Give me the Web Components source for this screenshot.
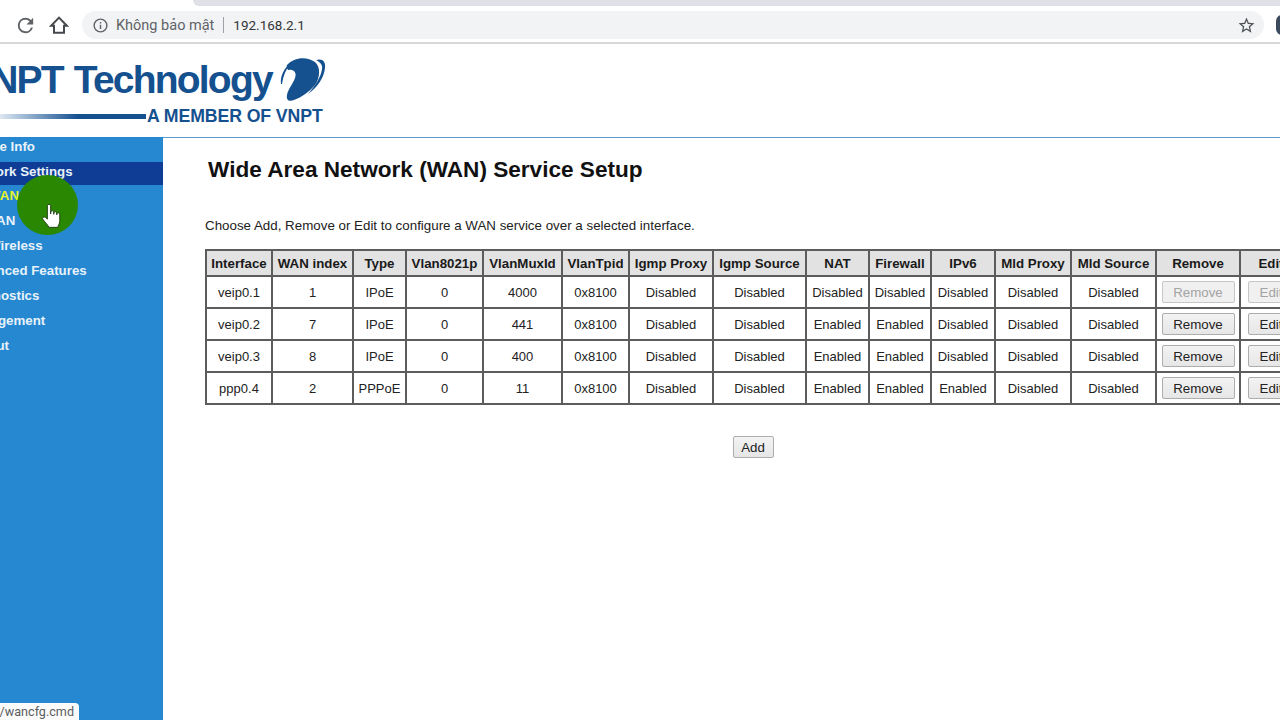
<!DOCTYPE html>
<html lang="vi">
<head>
<meta charset="utf-8">
<title>WAN Service Setup</title>
<style>
  html, body { margin: 0; height: 720px; overflow: hidden; background: #fff; font-family: "Liberation Sans", Arial, sans-serif; }
  .page { display: flex; flex-direction: column; width: 1280px; height: 720px; overflow: hidden; position: relative; }
  .scrolled { display: flex; flex-direction: column; flex: 1; margin-left: -40px; min-height: 0; }
  .content { display: flex; flex: 1; min-height: 0; }
</style>
</head>
<body>

<template id="browser-bar-tpl">
  <style>
    :host { display: block; height: 44px; background: #fff; border-bottom: 2px solid #d8d8da; box-sizing: border-box; flex: none; }
    .strip { height: 6px; margin-left: 193px; background: #dfe1e6; border-bottom-left-radius: 6px; }
    .row { display: flex; align-items: center; height: 28px; margin-top: 5px; padding-left: 14px; }
    svg { display: block; flex: none; }
    .home { margin-left: 12px; }
    .omni { display: flex; align-items: center; flex: none; width: 1182px; height: 28px; margin-left: 13px; border-radius: 14px; background: #f1f3f4; padding: 0 8px 0 10px; box-sizing: border-box; font: 13.5px "Roboto", "Liberation Sans", sans-serif; }
    .warn { color: #5f6368; margin-left: 7px; font-size: 14.5px; }
    .sep { width: 1px; height: 16px; background: #9aa0a6; margin: 0 9px 0 9px; }
    .url { color: #33363a; flex: 1; }
    .avatar { width: 12px; height: 20px; flex: none; border-radius: 10px; background: #3c4a5e; margin-left: 12px; }
  </style>
  <div class="strip"></div>
  <div class="row">
    <svg width="23" height="23" viewBox="0 0 24 24" fill="#5f6368"><path d="M17.65 6.35A7.96 7.96 0 0 0 12 4a8 8 0 1 0 7.73 10h-2.08A6 6 0 1 1 12 6c1.66 0 3.14.69 4.22 1.78L13 11h7V4l-2.35 2.35z"/></svg>
    <svg class="home" width="20" height="20" viewBox="0 0 24 24" fill="none" stroke="#45484c" stroke-width="2.4" stroke-linejoin="miter"><path d="M12 3.200 2.500 13H6v8.200h12V13h3.500L12 3.200z"/></svg>
    <div class="omni">
      <svg width="17" height="17" viewBox="0 0 24 24" fill="#5f6368"><path d="M11 7h2v2h-2zm0 4h2v6h-2zm1-9a10 10 0 1 0 0 20 10 10 0 0 0 0-20zm0 18a8 8 0 1 1 0-16 8 8 0 0 1 0 16z"/></svg>
      <span class="warn">Không bảo mật</span>
      <span class="sep"></span>
      <span class="url">192.168.2.1</span>
      <svg width="19" height="19" viewBox="0 0 24 24" fill="#505357"><path d="M22 9.240l-7.190-.62L12 2 9.190 8.630 2 9.240l5.460 4.730L5.820 21 12 17.270 18.180 21l-1.630-7.030L22 9.240zM12 15.400l-3.760 2.270 1-4.280-3.320-2.880 4.380-.38L12 6.100l1.710 4.040 4.380.38-3.320 2.880 1 4.280L12 15.400z"/></svg>
    </div>
    <span class="avatar"></span>
  </div>
</template>

<template id="vnpt-header-tpl">
  <style>
    :host { display: block; height: 93px; flex: none; background: #fff; box-sizing: border-box; color: #15508f; font-family: "Liberation Sans", Arial, sans-serif; font-weight: bold; }
    .wrap { display: flex; height: 100%; padding-left: 6px; box-sizing: border-box; }
    .txt { display: flex; flex-direction: column; width: 312px; }
    .name { font-size: 39px; line-height: 40px; margin-top: 16px; white-space: nowrap; letter-spacing: -1.8px; word-spacing: 2px; }
    .sub { display: flex; align-items: center; margin-top: 7px; white-space: nowrap; }
    .bar { width: 180px; height: 5px; flex: none; margin-right: 1px; background: linear-gradient(90deg, #fff 0%, #fff 12%, #a9c2da 30%, #15508f 62%, #15508f 100%); }
    .member { font-size: 17.7px; line-height: 18px; letter-spacing: -0.1px; }
    svg { display: block; margin: 10px 0 0 0; flex: none; }
  </style>
  <div class="wrap">
    <div class="txt">
      <div class="name"><slot name="name"></slot></div>
      <div class="sub"><span class="bar"></span><span class="member"><slot name="member"></slot></span></div>
    </div>
    <svg width="50" height="52" viewBox="6 3 50 52">
      <path fill="#15508f" d="M15 14C22 6 35 5 43 11c6 5 5 16 0 23-6 7-13 12-21 15-5 2-8 0-7-5 1-6 6-11 8-17 2-5-1-9-6-8-1 0-3-2-2-5z"/>
      <path fill="#15508f" d="M9 33c-1-8 3-16 10-21-5 6-8 13-9 21H9z"/>
      <path fill="#15508f" d="M44 9c6-2 10 1 9 8-1 10-8 20-17 26 7-8 13-17 14-25 1-4-2-7-6-9z"/>
    </svg>
  </div>
</template>

<template id="side-menu-tpl">
  <style>
    :host { display: block; width: 203px; flex: none; background: #2588d0; box-sizing: border-box; overflow: hidden; }
  </style>
  <slot></slot>
</template>

<template id="menu-item-tpl">
  <style>
    :host { display: block; height: 25px; padding: 1px 0 0 4px; box-sizing: border-box; font: bold 13.3px/18px "Liberation Sans", Arial, sans-serif; color: #e8f2fa; white-space: nowrap; }
    :host([sub]) { padding-left: 28px; }
    :host([current]) { background: #0f3d96; height: 23px; margin: 0 0 1px; }
    :host([active]) { color: #e6f52e; }
  </style>
  <slot></slot>
</template>

<template id="wan-table-tpl">
  <style>
    :host { display: block; width: 1096px; color: #222; font: 13px "Liberation Sans", Arial, sans-serif; }
    table { border-collapse: collapse; table-layout: fixed; width: 1096px; }
    th, td { border: 2px solid #5c5c5c; text-align: center; padding: 0; overflow: hidden; white-space: nowrap; }
    th { background: #e2e2e2; height: 24px; font-weight: bold; font-size: 13.3px; color: #1a1a1a; }
    td { height: 30px; }
    button { display: block; margin: 0 auto; font: 13.3px "Liberation Sans", Arial, sans-serif; color: #222; background: linear-gradient(#f3f3f3, #e6e6e6); border: 1px solid #adadad; border-radius: 2px; height: 22px; padding: 0; width: 73px; }
    button.edit { width: 47px; }
    button[disabled] { color: #a3a3a3; background: #f0f0f0; border-color: #c6c6c6; }
  </style>
  <table><colgroup></colgroup><thead><tr></tr></thead><tbody></tbody></table>
</template>

<template id="wan-setup-tpl">
  <style>
    :host { display: block; flex: 1; min-width: 0; overflow: hidden; background: #fff; border-top: 1px solid #5b9bd0; box-sizing: border-box; padding: 0 0 0 42px; }
    h1 { font: bold 22.6px/26px "Liberation Sans", Arial, sans-serif; color: #111; margin: 19px 0 0 3px; white-space: nowrap; }
    p { font: 13.35px/16px "Liberation Sans", Arial, sans-serif; color: #222; margin: 35px 0 15px; white-space: nowrap; }
    .actions { display: flex; justify-content: center; width: 1096px; margin-top: 31px; }
    button { font: 13.3px "Liberation Sans", Arial, sans-serif; color: #222; background: linear-gradient(#f3f3f3, #e6e6e6); border: 1px solid #adadad; border-radius: 2px; width: 41px; height: 22px; padding: 0; }
  </style>
  <h1><slot name="title"></slot></h1>
  <p><slot name="hint"></slot></p>
  <slot></slot>
  <div class="actions"><button>Add</button></div>
</template>

<template id="cursor-mark-tpl">
  <style>
    :host { display: block; position: absolute; left: 17px; top: 175px; width: 61px; height: 60px; border-radius: 50%; background: #2a8702; }
    svg { position: absolute; left: 25px; top: 29px; }
  </style>
  <svg width="20" height="25" viewBox="1.200 0.600 16 24" preserveAspectRatio="none">
    <path fill="#fff" stroke="#1c3c10" stroke-width="0.8" stroke-linejoin="round" d="M5.500 2.200c0-1.600 2.600-1.600 2.600 0v8l.1-2c0-1.400 2.400-1.400 2.400 0v2.300-1.400c0-1.400 2.400-1.400 2.400 0v2l.1-1c0-1.300 2.300-1.300 2.300 0v6.500c0 3-1.600 5.400-1.600 6.400H6.700c-.6-2.200-3.700-5.400-4.900-7.900-.7-1.500 1-2.700 2.300-1.500l1.400 1.500V2.200z"/>
  </svg>
</template>

<template id="status-bubble-tpl">
  <style>
    :host { display: block; position: absolute; left: 0; bottom: 0; width: 79px; height: 17px; overflow: hidden; background: #fbfbfb; border-top-right-radius: 4px; box-sizing: border-box; font: 12.6px/18px "Roboto", "Liberation Sans", sans-serif; color: #5a5d60; direction: rtl; padding-right: 5px; white-space: nowrap; }
    span { unicode-bidi: plaintext; }
  </style>
  <span><slot></slot></span>
</template>

<div class="page">
  <browser-bar></browser-bar>
  <div class="scrolled">
    <vnpt-header>
      <span slot="name">VNPT Technology</span>
      <span slot="member">A MEMBER OF VNPT</span>
    </vnpt-header>
    <div class="content">
      <side-menu>
        <menu-item>Device Info</menu-item>
        <menu-item current>Network Settings</menu-item>
        <menu-item sub active>WAN</menu-item>
        <menu-item sub>LAN</menu-item>
        <menu-item sub>Wireless</menu-item>
        <menu-item>Advanced Features</menu-item>
        <menu-item>Diagnostics</menu-item>
        <menu-item>Management</menu-item>
        <menu-item>Logout</menu-item>
      </side-menu>
      <wan-setup>
        <span slot="title">Wide Area Network (WAN) Service Setup</span>
        <span slot="hint">Choose Add, Remove or Edit to configure a WAN service over a selected interface.</span>
        <wan-table></wan-table>
      </wan-setup>
    </div>
  </div>
  <cursor-mark></cursor-mark>
  <status-bubble>192.168.2.1/wancfg.cmd</status-bubble>
</div>

<script>
  // plain elements: clone the template into an open shadow root
  function plain(tag) {
    customElements.define(tag, class extends HTMLElement {
      constructor() {
        super();
        this.attachShadow({ mode: 'open' });
        this.shadowRoot.appendChild(document.getElementById(tag + '-tpl').content.cloneNode(true));
      }
    });
  }
  ['browser-bar', 'vnpt-header', 'side-menu', 'menu-item', 'wan-setup', 'cursor-mark', 'status-bubble'].forEach(plain);

  const COLS = [
    ['Interface', 66], ['WAN index', 81], ['Type', 53], ['Vlan8021p', 77], ['VlanMuxId', 79],
    ['VlanTpid', 67], ['Igmp Proxy', 84], ['Igmp Source', 93], ['NAT', 63], ['Firewall', 62],
    ['IPv6', 64], ['Mld Proxy', 76], ['Mld Source', 85], ['Remove', 84], ['Edit', 62]
  ];
  const ROWS = [
    ['veip0.1', '1', 'IPoE', '0', '4000', '0x8100', 'Disabled', 'Disabled', 'Disabled', 'Disabled', 'Disabled', 'Disabled', 'Disabled', false],
    ['veip0.2', '7', 'IPoE', '0', '441', '0x8100', 'Disabled', 'Disabled', 'Enabled', 'Enabled', 'Disabled', 'Disabled', 'Disabled', true],
    ['veip0.3', '8', 'IPoE', '0', '400', '0x8100', 'Disabled', 'Disabled', 'Enabled', 'Enabled', 'Disabled', 'Disabled', 'Disabled', true],
    ['ppp0.4', '2', 'PPPoE', '0', '11', '0x8100', 'Disabled', 'Disabled', 'Enabled', 'Enabled', 'Enabled', 'Disabled', 'Disabled', true]
  ];

  class WanTable extends HTMLElement {
    constructor() {
      super();
      this.attachShadow({ mode: 'open' });
      this.shadowRoot.appendChild(document.getElementById('wan-table-tpl').content.cloneNode(true));
    }

    connectedCallback() {
      const root = this.shadowRoot;
      root.querySelector('colgroup').innerHTML = COLS.map(c => `<col style="width:${c[1]}px">`).join('');
      root.querySelector('thead tr').innerHTML = COLS.map(c => `<th>${c[0]}</th>`).join('');
      root.querySelector('tbody').innerHTML = ROWS.map(r => {
        const off = r[13] ? '' : ' disabled';
        const cells = r.slice(0, 13).map(v => `<td>${v}</td>`).join('');
        return `<tr>${cells}<td><button${off}>Remove</button></td><td><button class="edit"${off}>Edit</button></td></tr>`;
      }).join('');
    }
  }
  customElements.define('wan-table', WanTable);
</script>
</body>
</html>
